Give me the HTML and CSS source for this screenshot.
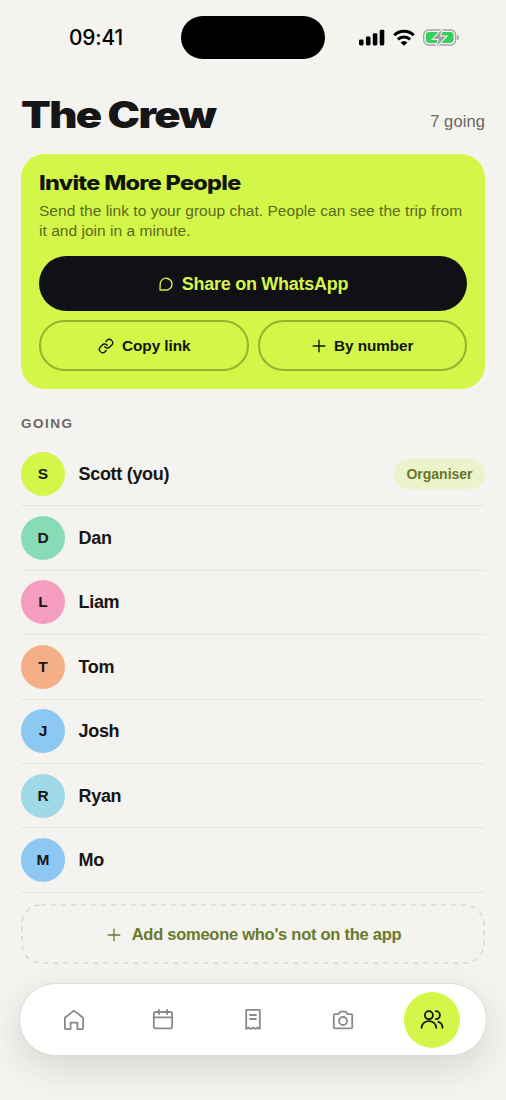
FILE: index.html
```html
<!DOCTYPE html>
<html lang="en">
<head>
<meta charset="utf-8">
<title>The Crew</title>
<link rel="stylesheet" href="styles.css">
</head>
<body>
<div class="screen">
  <div class="status">
    <div class="time">09:41</div>
    <div class="island"></div>
    <div class="signals">
      <svg width="26" height="18" viewBox="0 0 26 18"><rect x="0" y="10.5" width="4.6" height="6" rx="1.4"/><rect x="6.9" y="7.6" width="4.6" height="8.9" rx="1.4"/><rect x="13.8" y="4.3" width="4.6" height="12.2" rx="1.4"/><rect x="20.7" y=".8" width="4.6" height="15.7" rx="1.4"/></svg>
      <svg class="wifi" width="22" height="18" viewBox="0 0 22 18"><path d="M1.2 6.2a14 14 0 0 1 19.6 0M4.9 10.4a9 9 0 0 1 12.2 0" fill="none" stroke="#000" stroke-width="3"/><path d="m11 16.8-3.5-3.2a5.3 5.3 0 0 1 7 0z"/></svg>
      <svg class="battery" width="37" height="18" viewBox="0 0 37 18"><rect x=".7" y="1" width="32" height="15" rx="5" fill="none" stroke="#a3a3a2" stroke-width="1.3"/><path d="M34.2 6v5.2c2.4-.5 2.4-4.7 0-5.2z" fill="#a3a3a2"/><rect x="2.8" y="3.1" width="27.8" height="10.8" rx="3.3" fill="#36cf5e"/><path d="M18.8.6 10.2 9.9h5.5l-1.9 7.2 9.2-9.5h-6z" fill="#a3a3a2" stroke="#f4f3ef" stroke-width="2" paint-order="stroke"/></svg>
    </div>
  </div>

  <header class="header">
    <h1 class="title">The Crew</h1>
    <span class="count">7 going</span>
  </header>

  <section class="invite">
    <h2 class="invite-title">Invite More People</h2>
    <p class="invite-text">Send the link to your group chat. People can see the trip from<br>it and join in a minute.</p>
    <button class="share"><svg width="14" height="14" viewBox="0 0 14 14"><path d="M1 13 1.2 7A5.9 5.9 0 1 1 7.1 13z"/></svg><span>Share on WhatsApp</span></button>
    <div class="pair">
      <button class="outline"><svg width="16" height="16" viewBox="0 0 24 24"><path d="M10 13a5 5 0 0 0 7.54.54l3-3a5 5 0 0 0-7.07-7.07l-1.72 1.71M14 11a5 5 0 0 0-7.54-.54l-3 3a5 5 0 0 0 7.07 7.07l1.71-1.71" stroke-width="2"/></svg><span>Copy link</span></button>
      <button class="outline"><svg width="14" height="14" viewBox="0 0 14 14"><path d="M7 1.2v11.6M1.2 7h11.6"/></svg><span>By number</span></button>
    </div>
  </section>

  <h3 class="label">GOING</h3>
  <ul class="people">
    <li class="person"><span class="avatar lime">S</span><span class="name">Scott (you)</span><span class="badge">Organiser</span></li>
    <li class="person"><span class="avatar mint">D</span><span class="name">Dan</span></li>
    <li class="person"><span class="avatar pink">L</span><span class="name">Liam</span></li>
    <li class="person"><span class="avatar orange">T</span><span class="name">Tom</span></li>
    <li class="person"><span class="avatar blue">J</span><span class="name">Josh</span></li>
    <li class="person"><span class="avatar aqua">R</span><span class="name">Ryan</span></li>
    <li class="person"><span class="avatar blue">M</span><span class="name">Mo</span></li>
  </ul>

  <button class="add">
    <svg class="dash" width="464" height="60"><rect x="1" y="1" width="462" height="58" rx="19"/></svg>
    <svg width="14" height="14" viewBox="0 0 14 14"><path d="M7 1.2v11.6M1.2 7h11.6"/></svg><span>Add someone who's not on the app</span>
  </button>

  <nav class="nav">
    <a class="tab"><svg width="24" height="24" viewBox="0 0 24 24"><path d="M2.9 9.8 12 2.6l9.1 7.2v10.3q0 1-1 1h-4.7v-6.4H8.6v6.4H3.9q-1 0-1-1z"/></svg></a>
    <a class="tab"><svg width="24" height="24" viewBox="0 0 24 24"><rect x="2.8" y="4" width="18.4" height="16.4" rx="2.2"/><path d="M2.8 9.4h18.4M7.9 1.8v4.3M16.1 1.8v4.3"/></svg></a>
    <a class="tab"><svg width="24" height="24" viewBox="0 0 24 24"><path d="M5.2 1.9h13.6v19l-2.3-1.5-2.2 1.5-2.3-1.5-2.3 1.5-2.2-1.5-2.3 1.5zM9 7h6M9 11h6"/></svg></a>
    <a class="tab"><svg width="24" height="24" viewBox="0 0 24 24"><path d="M3.8 6.2h3.6L9.1 3.7h5.8l1.7 2.5h3.6q1 0 1 1v12.1q0 1-1 1H3.8q-1 0-1-1V7.2q0-1 1-1z"/><circle cx="12" cy="13" r="4"/></svg></a>
    <a class="tab active"><span class="disc"><svg width="24" height="24" viewBox="0 0 24 24"><circle cx="8.9" cy="7.2" r="4"/><path d="M1.6 19.8c0-8.8 14.6-8.8 14.6 0M15.9 3.2a4 4 0 0 1 0 8M18.4 13.8c2.7.9 4.1 3 4.1 6"/></svg></span></a>
  </nav>
</div>
</body>
</html>
```
FILE: styles.css
```css
* { box-sizing: border-box; margin: 0; padding: 0; }
body { background: #f4f3ef; color: #161616; font-family: "Liberation Sans", Arial, sans-serif; }
.screen { width: 506px; height: 1100px; padding: 0 21px; overflow: hidden; }
svg { display: block; flex: none; }
button { background: none; border: 0; font: inherit; font-weight: 700; display: flex; align-items: center; justify-content: center; white-space: nowrap; }
button svg, .nav svg { fill: none; stroke: currentColor; stroke-width: 1.35; stroke-linejoin: round; stroke-linecap: round; }

.status { display: flex; align-items: center; height: 43px; margin-top: 16px; }
.time { width: 160px; padding: 1px 0 0 48px; font: 500 20.8px/24px Inter, sans-serif; letter-spacing: -.1px; color: #000; }
.island { width: 144px; height: 43px; border-radius: 22px; background: #000; }
.signals { display: flex; align-items: center; margin-left: 34px; }
.wifi { margin-left: 8px; }
.battery { margin-left: 8px; }

.header { display: flex; justify-content: space-between; align-items: flex-start; height: 95px; padding-top: 33px; }
.title { font: 900 36.5px/46px Inter, sans-serif; letter-spacing: -1.35px; transform: scaleX(1.19); transform-origin: left; white-space: nowrap; }
.count { padding-top: 20px; font-size: 16.5px; line-height: 19px; color: #686866; letter-spacing: .1px; }

.invite { height: 235px; padding: 18px; border-radius: 24px; background: #d4f648; }
.invite-title { padding-top: 1px; font: 800 19.5px/20px Inter, sans-serif; letter-spacing: -.58px; transform: scaleX(1.2); transform-origin: left; white-space: nowrap; color: #10150a; }
.invite-text { margin-top: 8px; font-size: 15.5px; line-height: 19.5px; letter-spacing: .03px; color: #5a6a1c; white-space: nowrap; }
.share { width: 428px; height: 55px; margin-top: 16px; border-radius: 28px; background: #101015; color: #d4f648; font-size: 18px; letter-spacing: -.27px; gap: 9px; padding: 1px 0 0 1px; }
.pair { display: grid; grid-template-columns: 1fr 1fr; gap: 9px; margin-top: 9px; }
.outline { height: 51px; border: 2px solid #98b032; border-radius: 26px; font-size: 15.3px; letter-spacing: -.06px; gap: 8px; color: #10150a; padding-left: 1px; }

.label { margin-top: 26px; font-size: 13.5px; line-height: 18px; letter-spacing: 1.5px; color: #686866; }
.people { list-style: none; margin-top: 9px; }
.person { display: flex; align-items: center; height: 64.4px; border-bottom: 1px solid #e4e3df; }
.avatar { width: 44px; height: 44px; border-radius: 50%; display: grid; place-items: center; font-size: 15.5px; font-weight: 700; }
.name { margin-left: 13.5px; padding-top: 1px; font-size: 18px; font-weight: 700; letter-spacing: -.3px; }
.lime { background: #d4f648; }
.mint { background: #87dbb7; }
.pink { background: #f49dbf; }
.orange { background: #f5af87; }
.blue { background: #8dc8f2; }
.aqua { background: #9fd9e8; }
.badge { margin-left: auto; width: 91px; height: 30px; border-radius: 15px; background: #ebf3ca; color: #66772c; font-size: 14px; font-weight: 700; line-height: 30px; text-align: center; }

.add { position: relative; width: 464px; height: 60px; margin-top: 11.5px; padding: 1px 0 0 2px; gap: 11px; color: #697a2b; font-size: 16.5px; letter-spacing: -.26px; }
.add .dash { position: absolute; inset: 0; stroke: #dad9d4; stroke-width: 1.6; stroke-dasharray: 5 5; stroke-linecap: butt; }

.nav { display: flex; width: 468px; height: 73px; margin: 18.5px -2px 0; padding: 1px 9px 0; border: 1px solid #dddcd8; border-radius: 37px; background: #fff; box-shadow: 0 12px 34px rgba(30, 30, 20, .13); }
.tab { flex: 1; display: grid; place-items: center; color: #8a8a87; }
.tab svg { stroke-width: 1.8; }
.disc { width: 56px; height: 56px; border-radius: 50%; display: grid; place-items: center; background: #d4f648; }
.tab.active { color: #10150a; }
```
